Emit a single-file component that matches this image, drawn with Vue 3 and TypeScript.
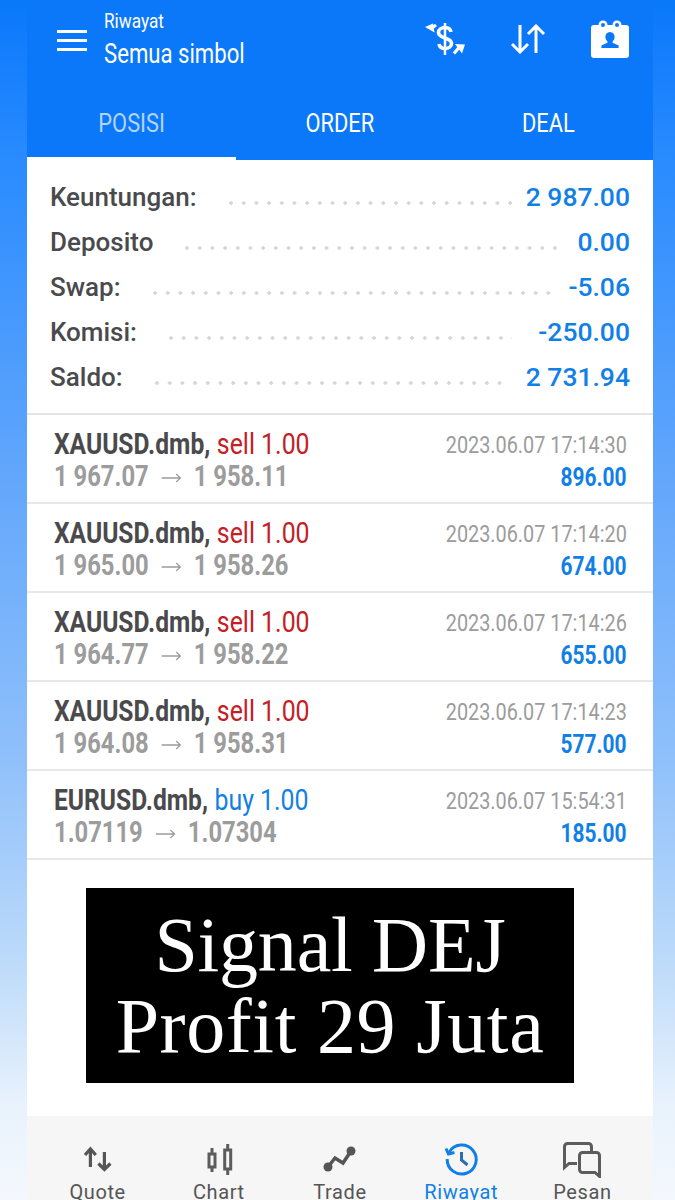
<script setup lang="ts">
const summary = [
  { label: 'Keuntungan:', value: '2 987.00', left: 32, right: 12 },
  { label: 'Deposito', value: '0.00', left: 32, right: 18 },
  { label: 'Swap:', value: '-5.06', left: 32, right: 14 },
  { label: 'Komisi:', value: '-250.00', left: 32, right: 26 },
  { label: 'Saldo:', value: '2 731.94', left: 32, right: 22 },
]

const deals = [
  { symbol: 'XAUUSD.dmb,', side: 'sell', open: '1 967.07', close: '1 958.11', time: '2023.06.07 17:14:30', profit: '896.00' },
  { symbol: 'XAUUSD.dmb,', side: 'sell', open: '1 965.00', close: '1 958.26', time: '2023.06.07 17:14:20', profit: '674.00' },
  { symbol: 'XAUUSD.dmb,', side: 'sell', open: '1 964.77', close: '1 958.22', time: '2023.06.07 17:14:26', profit: '655.00' },
  { symbol: 'XAUUSD.dmb,', side: 'sell', open: '1 964.08', close: '1 958.31', time: '2023.06.07 17:14:23', profit: '577.00' },
  { symbol: 'EURUSD.dmb,', side: 'buy', open: '1.07119', close: '1.07304', time: '2023.06.07 15:54:31', profit: '185.00' },
]
</script>

<template>
  <div class="page">
    <div class="phone">
      <header class="topbar">
        <div class="burger"><i></i><i></i><i></i></div>
        <div class="titles">
          <div class="sub"><span class="sq">Riwayat</span></div>
          <div class="title"><span class="sq">Semua simbol</span></div>
        </div>
        <div class="actions">
          <svg class="ico-dollar" width="42" height="34" viewBox="0 0 42 34" fill="none" stroke="#fff">
            <path d="M21 1v32" stroke-width="2.500" />
            <path d="M27 10c-.5-3-3-4.500-6-4.500-3.500 0-6.500 2-6.500 5 0 3 3 4.300 6.500 5.500 3.500 1.200 6.500 2.500 6.500 5.500 0 3-3 5-6.500 5-3 0-5.500-1.500-6-4.500" stroke-width="3.600" />
            <path d="M12 3 7 6.500" stroke-width="3.200" />
            <path d="M1 5l8-3.500 1.500 9z" fill="#fff" stroke="none" />
            <path d="M30 31.500l5-6" stroke-width="3.200" />
            <path d="M31 22l10 .5-3 9z" fill="#fff" stroke="none" />
          </svg>
          <svg class="ico-sort" width="36" height="30" viewBox="0 0 36 30" fill="none" stroke="#fff" stroke-width="3">
            <path d="M10 1v27M2 20l8 8 8-8" />
            <path d="M26 29V2M18 10l8-8 8 8" />
          </svg>
          <svg class="ico-book" width="38" height="38" viewBox="0 0 38 38">
            <circle cx="12" cy="5" r="4.500" fill="#fff" />
            <circle cx="26" cy="5" r="4.500" fill="#fff" />
            <rect x="0" y="5" width="38" height="33" rx="3" fill="#fff" />
            <circle cx="12" cy="5" r="2" fill="#0a78f8" />
            <circle cx="26" cy="5" r="2" fill="#0a78f8" />
            <path d="M19 12c-3 0-4.600 2.200-4.600 4.800 0 2 .8 3.600 2 4.500v1.500l-6 2.700V28h17.200v-2.500l-6-2.700v-1.500c1.200-.9 2-2.500 2-4.500C23.600 14.200 22 12 19 12z" fill="#0a78f8" />
          </svg>
        </div>
      </header>

      <nav class="tabs">
        <div class="tab active"><span class="sq-c">POSISI</span></div>
        <div class="tab"><span class="sq-c">ORDER</span></div>
        <div class="tab"><span class="sq-c">DEAL</span></div>
      </nav>

      <main class="sheet">
        <section class="summary">
          <div v-for="row in summary" :key="row.label" class="sum-row">
            <span class="sum-label">{{ row.label }}</span>
            <span class="dots" :style="{ marginLeft: row.left + 'px', marginRight: row.right + 'px' }"></span>
            <span class="sum-value">{{ row.value }}</span>
          </div>
        </section>

        <section class="deals">
          <div v-for="(deal, i) in deals" :key="i" class="deal">
            <div class="deal-left">
              <div class="deal-head">
                <span class="sq"><b>{{ deal.symbol }}</b><span class="side" :class="deal.side">{{ deal.side }} 1.00</span></span>
              </div>
              <div class="deal-price">
                <span class="sq"><b>{{ deal.open }}</b><svg class="arrow" width="24" height="10" viewBox="0 0 24 10" fill="none" stroke="#9c9c9c" stroke-width="1.500"><path d="M0 5h23M18 1l5 4-5 4" /></svg><b>{{ deal.close }}</b></span>
              </div>
            </div>
            <div class="deal-right">
              <div class="deal-time"><span class="sq-r">{{ deal.time }}</span></div>
              <div class="deal-profit"><span class="sq-r">{{ deal.profit }}</span></div>
            </div>
          </div>
        </section>

        <section class="promo">
          <div class="banner">
            <div class="banner-top">Signal DEJ</div>
            <div>Profit 29 Juta</div>
          </div>
        </section>
      </main>

      <footer class="bottom">
        <div class="nav-item">
          <svg width="40" height="36" viewBox="0 0 40 36" fill="none" stroke="#555" stroke-width="3.200">
            <path d="M12.400 25V7.500M7 13l5.400-6 5.400 6" />
            <path d="M26.400 10v17.500M20.400 21.500l6 6 6-6" />
          </svg>
          <span class="nav-label">Quote</span>
        </div>
        <div class="nav-item">
          <svg width="40" height="36" viewBox="0 0 40 36" fill="none" stroke="#5c5c5c" stroke-width="3">
            <rect x="10" y="12" width="6" height="13" />
            <path d="M13 6v6M13 25v5" />
            <rect x="25.700" y="8" width="6" height="19" />
            <path d="M28.700 2v6M28.700 27v6" />
          </svg>
          <span class="nav-label">Chart</span>
        </div>
        <div class="nav-item">
          <svg width="40" height="36" viewBox="0 0 40 36" fill="none" stroke="#555">
            <path d="M8 25l7-9 8 5 8-12" stroke-width="3.500" />
            <circle cx="8" cy="25" r="4.500" fill="#555" stroke="none" />
            <circle cx="31" cy="9" r="4.500" fill="#555" stroke="none" />
          </svg>
          <span class="nav-label">Trade</span>
        </div>
        <div class="nav-item current">
          <svg width="40" height="36" viewBox="0 0 40 36" fill="none" stroke="#1180e6" stroke-width="3">
            <path d="M8 10.500A14.500 14.500 0 1 1 6.200 17" />
            <path d="M5 6.500l2.500 5.500 6-1.500" />
            <path d="M20.500 10v8l6 5" stroke="#2a6fb3" />
          </svg>
          <span class="nav-label">Riwayat</span>
        </div>
        <div class="nav-item">
          <svg width="40" height="36" viewBox="0 0 40 36" fill="none" stroke="#5c5c5c" stroke-width="3">
            <path d="M15 21.500H7l-4.500 4V4.500a3 3 0 0 1 3-3h21a3 3 0 0 1 3 3V10" />
            <path d="M37.500 34.500 33 30.500H20.500a3 3 0 0 1-3-3V13.500a3 3 0 0 1 3-3h14a3 3 0 0 1 3 3z" />
          </svg>
          <span class="nav-label">Pesan</span>
        </div>
      </footer>
    </div>
  </div>
</template>

<style>
html,
body {
  margin: 0;
  padding: 0;
}
</style>

<style scoped>
.page {
  width: 675px;
  height: 1200px;
  overflow: hidden;
  padding: 0 22px 0 27px;
  box-sizing: border-box;
  background: linear-gradient(180deg, #0a78fb 0%, #2b8cff 14%, #67a9fb 42%, #8fc0fb 63%, #bcdafa 80%, #e8f2fc 92%, #f4f8fd 100%);
  font-family: Roboto, 'Liberation Sans', sans-serif;
}

.phone {
  height: 1200px;
  display: flex;
  flex-direction: column;
  background: #fff;
}

.sq,
.sq-c,
.sq-r {
  display: inline-block;
  white-space: pre;
  transform: scaleX(0.82);
}

.sq {
  transform-origin: left center;
}

.sq-c {
  transform: scaleX(0.84);
}

.sq-r {
  transform-origin: right center;
}

.topbar {
  height: 82px;
  flex: none;
  display: flex;
  align-items: flex-start;
  background: #0a78f8;
  color: #fff;
}

.burger {
  width: 30px;
  margin: 30px 0 0 30px;
  display: flex;
  flex-direction: column;
  gap: 6px;
}

.burger i {
  display: block;
  height: 3px;
  background: #fff;
}

.titles {
  margin: 10px 0 0 17px;
  white-space: nowrap;
}

.sub {
  font-size: 21px;
  line-height: 23px;
}

.title {
  margin-top: 5px;
  font-size: 27px;
  line-height: 32px;
}

.actions {
  margin-left: auto;
  margin-right: 24px;
  display: flex;
  align-items: flex-start;
  padding-top: 20px;
}

.ico-dollar {
  margin-top: 2px;
}

.ico-sort {
  margin-left: 44px;
  margin-top: 4px;
}

.ico-book {
  margin-left: 45px;
}

.tabs {
  height: 78px;
  flex: none;
  display: flex;
  background: #0a78f8;
}

.tab {
  width: 209px;
  display: flex;
  align-items: center;
  justify-content: center;
  color: #fff;
  font-size: 26px;
  padding-top: 4px;
  box-sizing: border-box;
}

.tab.active {
  color: #b3d4fb;
  border-bottom: 3px solid #fff;
  padding-top: 7px;
}

.sheet {
  flex: 1;
  min-height: 0;
  display: flex;
  flex-direction: column;
}

.summary {
  height: 255px;
  flex: none;
  box-sizing: border-box;
  padding: 14px 23px 0;
  border-bottom: 2px solid #e4e4e4;
}

.sum-row {
  height: 45px;
  display: flex;
  align-items: center;
}

.sum-label {
  font-size: 26px;
  font-weight: 500;
  color: #4a4a4d;
}

.dots {
  flex: 1;
  height: 4px;
  margin-top: 12px;
  background-image: radial-gradient(circle at 2px 2px, #d6d6d6 1.500px, transparent 2px);
  background-size: 12.700px 4px;
  background-repeat: repeat-x;
}

.sum-value {
  font-size: 26.500px;
  font-weight: 500;
  color: #1180e6;
}

.deal {
  height: 89px;
  box-sizing: border-box;
  padding: 12px 26px 0 27px;
  display: flex;
  justify-content: space-between;
  border-bottom: 2px solid #e8e8e8;
}

.deal-head {
  font-size: 30px;
  line-height: 34px;
  color: #4a4a4d;
}

.deal-head b {
  font-weight: 700;
}

.side {
  margin-left: 8px;
  font-size: 30.300px;
}

.sell {
  color: #c22126;
}

.buy {
  color: #1180e6;
}

.deal-price {
  font-size: 29px;
  line-height: 30px;
  color: #9c9c9c;
}

.deal-price b {
  font-weight: 700;
}

.arrow {
  margin: 0 15px 0 16px;
  vertical-align: 3px;
}

.deal-right {
  text-align: right;
}

.deal-time {
  font-size: 24.200px;
  line-height: 34px;
  padding-top: 1px;
  color: #9c9c9c;
}

.deal-profit {
  font-size: 25.500px;
  line-height: 31px;
  font-weight: 700;
  color: #1180e6;
}

.promo {
  flex: 1;
  display: flex;
  justify-content: center;
  padding: 28px 20px 0 0;
}

.banner {
  width: 488px;
  height: 195px;
  box-sizing: border-box;
  padding-top: 16px;
  background: #000;
  color: #fff;
  text-align: center;
  font-family: 'Liberation Serif', serif;
  font-size: 78px;
  line-height: 81px;
  letter-spacing: 0.6px;
}

.banner-top {
  letter-spacing: -0.2px;
}

.bottom {
  height: 84px;
  flex: none;
  box-sizing: border-box;
  padding: 26px 10px 0;
  display: grid;
  grid-template-columns: repeat(5, 1fr);
  background: #f6f6f6;
}

.nav-item {
  height: 34px;
  display: flex;
  flex-direction: column;
  align-items: center;
  color: #555;
}

.nav-item svg {
  flex: none;
}

.nav-item.current {
  color: #1180e6;
}

.nav-label {
  margin-top: 2px;
  font-size: 20px;
  line-height: 24px;
  letter-spacing: 0.6px;
  white-space: nowrap;
}
</style>
